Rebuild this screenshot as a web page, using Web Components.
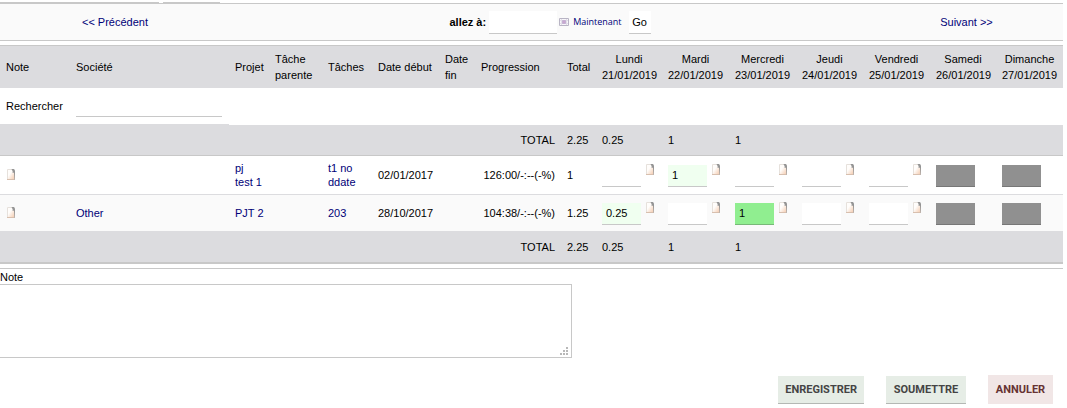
<!DOCTYPE html>
<html lang="fr">
<head>
<meta charset="utf-8">
<title>Feuille de temps</title>
<style>
body{margin:0;background:#fff;color:#000;font:11px/16px "Liberation Sans",Arial,sans-serif}
</style>
</head>
<body>
<time-page></time-page>
<script>
function define(name, html, setup){
  const tpl=document.createElement('template');
  tpl.innerHTML=html;
  customElements.define(name,class extends HTMLElement{
    connectedCallback(){
      if(this.shadowRoot)return;
      const root=this.attachShadow({mode:'open'});
      root.append(tpl.content.cloneNode(true));
      if(setup)setup(root,this);
    }
  });
}

/* small sheet of paper with a folded corner */
define('note-icon',`
<style>:host{display:block;width:10px;height:12px}svg{display:block}</style>
<svg width="10" height="12" viewBox="0 0 10 12" aria-hidden="true">
  <defs>
    <linearGradient id="g" x1="0" y1="0" x2="1" y2="1"><stop offset=".4" stop-color="#fffdfb"/><stop offset="1" stop-color="#f2c4a4"/></linearGradient>
    <linearGradient id="e" x1="0" y1="0" x2="0" y2="1"><stop offset="0" stop-color="#8c8c8c"/><stop offset="1" stop-color="#c4b8b0"/></linearGradient>
  </defs>
  <path d="M1 0H7L9 3V11H1Z" fill="url(#g)"/>
  <path d="M1.500 10.500V.5H6" fill="none" stroke="#e6e1dc"/>
  <path d="M1 10.500H9" stroke="#d8bfae"/>
  <path d="M8 2H9V11H8Z" fill="url(#e)"/>
  <path d="M5.500 0H8L9 1.500V4H7.500L6.500 2Z" fill="#959595"/>
  <path d="M6 2H7V4H6Z" fill="#d5d2d0"/>
</svg>`);

define('day-field',`
<style>
:host{display:flex;align-items:flex-start;gap:4px}
input{box-sizing:border-box;width:39px;height:22px;margin:1px 0 0;padding:0 4px;border:0;border-bottom:1px solid #c8c8c8;border-radius:0;background:#fff;font:inherit;color:#000}
:host([kind=pale]) input{background:#f0fff0}
:host([kind=strong]) input{background:#90ee90;border-color:#78b878}
:host([kind=off]) input{background:#909090;border-color:#777}
:host([kind=off]) note-icon{display:none}
</style>
<input type="text"><note-icon></note-icon>`,(root,host)=>{
  const i=root.querySelector('input');
  i.value=host.getAttribute('value')||'';
  i.setAttribute('aria-label',host.getAttribute('label'));
  i.disabled=host.getAttribute('kind')==='off';
});

define('week-nav',`
<style>
:host{display:grid;grid-template-columns:230fr 640fr 193fr;align-items:center;justify-items:center;height:36px;background:#fafafa;border:solid #c8c8c8;border-width:1px 0}
a{color:#000078;text-decoration:none}
form{display:flex;align-items:center;margin:0}
label{font-weight:bold}
input{box-sizing:border-box;width:68px;height:23px;margin:0 2px 0 3px;padding:0 4px;border:0;border-bottom:1px solid #c8c8c8;background:#fff;font:inherit}
button{margin:0;padding:0;border:0;background:none;font:inherit;color:#000}
.cal{line-height:0}
.now{margin:0 7px 0 4px;font:9px/16px "Open Sans",sans-serif;color:#000078}
.go{width:22px;height:23px;background:#fff;border-bottom:1px solid #c8c8c8}
</style>
<a href="#precedent">&lt;&lt; Précédent</a>
<form>
  <label for="d">allez à:</label><input id="d" type="text">
  <button type="button" class="cal" aria-label="Calendrier"><svg width="10" height="8" viewBox="0 0 10 8"><path d="M.5 .5H9.500V7.500H.5Z" fill="#f8f6fa" stroke="#b8b4c4"/><path d="M2.500 1V7M7.500 1V7M1 2.500H9M1 5.500H9" stroke="#e2dee8" fill="none"/><path d="M3.500 2.500H6.500V5.500H3.500Z" fill="#c9a6d0" stroke="#c4b0d2"/></svg></button>
  <button type="button" class="now">Maintenant</button>
  <button type="button" class="go">Go</button>
</form>
<a href="#suivant">Suivant &gt;&gt;</a>`);

define('time-table',`
<style>
:host{display:block}
table{width:100%;table-layout:fixed;border-collapse:separate;border-spacing:0;border-top:1px solid #c8c8c8;border-bottom:2px solid #c8c8c8}
td,th{box-sizing:border-box;padding:0 6px;text-align:left;vertical-align:middle;font-weight:normal}
.w70{width:70px}.w40{width:40px}.w53{width:53px}.w50{width:50px}.w67{width:67px}.w36{width:36px}.w86{width:86px}.w35{width:35px}.w66{width:66px}
thead tr,.total{background:#dcdcdf}
thead th{height:42px}
thead .day{text-align:center}
.search td{height:37px}
.search .edge{border-bottom:1px solid #dcdcdf}
.search input{box-sizing:border-box;width:100%;max-width:146px;height:22px;display:block;border:0;border-bottom:1px solid #c8c8c8;padding:0 4px;font:inherit}
.total td,.total th{height:31px}
.first td,.first th{border-bottom:1px solid #c8c8c8}
.total th,.num{text-align:right;white-space:nowrap}
.row td{height:39px;line-height:14px;border-bottom:1px solid #dcdcdf}
.row.alt td{height:36px;border-bottom:0;background:#fafafa}
.day{padding-right:0}
thead .day{padding-right:6px}
a{color:#000078;text-decoration:none}
.name{white-space:nowrap}
</style>
<table>
<colgroup><col class="w70"><col><col class="w40"><col class="w53"><col class="w50"><col class="w67"><col class="w36"><col class="w86"><col class="w35"><col class="w66"><col class="w67"><col class="w67"><col class="w67"><col class="w67"><col class="w66"><col class="w67"></colgroup>
<thead><tr><th>Note</th><th>Société</th><th>Projet</th><th>Tâche parente</th><th>Tâches</th><th>Date début</th><th>Date fin</th><th>Progression</th><th>Total</th>
<th class="day">Lundi<br>21/01/2019</th><th class="day">Mardi<br>22/01/2019</th><th class="day">Mercredi<br>23/01/2019</th><th class="day">Jeudi<br>24/01/2019</th><th class="day">Vendredi<br>25/01/2019</th><th class="day">Samedi<br>26/01/2019</th><th class="day">Dimanche<br>27/01/2019</th></tr></thead>
<tbody>
<tr class="search"><td class="edge"><label for="s">Rechercher</label></td><td class="edge"><input id="s" type="text"></td><td colspan="14"></td></tr>
<tr class="total first"><th colspan="8">TOTAL</th><td>2.25</td><td>0.25</td><td>1</td><td>1</td><td></td><td></td><td></td><td></td></tr>
<tr class="row"><td><note-icon></note-icon></td><td></td><td class="name"><a href="#pj">pj<br>test 1</a></td><td></td><td><a href="#t1">t1 no ddate</a></td><td>02/01/2017</td><td></td><td class="num">126:00/-:--(-%)</td><td>1</td>
<td class="day"><day-field label="Lundi"></day-field></td><td class="day"><day-field label="Mardi" value="1" kind="pale"></day-field></td><td class="day"><day-field label="Mercredi"></day-field></td><td class="day"><day-field label="Jeudi"></day-field></td><td class="day"><day-field label="Vendredi"></day-field></td><td class="day"><day-field label="Samedi" kind="off"></day-field></td><td class="day"><day-field label="Dimanche" kind="off"></day-field></td></tr>
<tr class="row alt"><td><note-icon></note-icon></td><td><a href="#other">Other</a></td><td class="name"><a href="#pjt2">PJT 2</a></td><td></td><td><a href="#203">203</a></td><td>28/10/2017</td><td></td><td class="num">104:38/-:--(-%)</td><td>1.25</td>
<td class="day"><day-field label="Lundi" value="0.25" kind="pale"></day-field></td><td class="day"><day-field label="Mardi"></day-field></td><td class="day"><day-field label="Mercredi" value="1" kind="strong"></day-field></td><td class="day"><day-field label="Jeudi"></day-field></td><td class="day"><day-field label="Vendredi"></day-field></td><td class="day"><day-field label="Samedi" kind="off"></day-field></td><td class="day"><day-field label="Dimanche" kind="off"></day-field></td></tr>
<tr class="total"><th colspan="8">TOTAL</th><td>2.25</td><td>0.25</td><td>1</td><td>1</td><td></td><td></td><td></td><td></td></tr>
</tbody>
</table>`);

define('note-box',`
<style>
:host{display:block;border-top:1px solid #c8c8c8}
label{display:block;height:15px}
.box{position:relative;width:572px;max-width:100%}
textarea{box-sizing:border-box;display:block;width:100%;height:74px;margin:0;padding:2px 4px;border:1px solid #c8c8c8;border-left:0;border-radius:0;resize:none;font:inherit;background:#fff}
svg{position:absolute;right:4px;bottom:3px;pointer-events:none}
</style>
<label for="n">Note</label>
<div class="box"><textarea id="n"></textarea>
<svg width="8" height="8" aria-hidden="true" fill="#b8b8b8"><path d="M6 0h2v2h-2zM3 3h2v2h-2zM6 3h2v2h-2zM0 6h2v2h-2zM3 6h2v2h-2zM6 6h2v2h-2z"/></svg></div>`);

define('action-button',`
<style>
:host{display:block}
button{box-sizing:border-box;height:28px;min-width:80px;margin:0;padding:0 7px;border:0;border-bottom:1px solid #b4b8b4;border-radius:0;background:#e6ede6;color:#444;font:bold 11px/16px Roboto,sans-serif;display:block}
:host([cancel]) button{height:29px;min-width:65px;border-bottom:0;background:#f1e6e6;color:#633}
</style>
<button type="button"><slot></slot></button>`);

define('time-page',`
<style>
:host{display:block}
main{margin-right:4px}
.tabs{display:flex;gap:4px;height:3px}
.tabs span{box-sizing:border-box;border-bottom:1px solid #c8c8c8;width:159px}
.tabs span+span{width:57px}
time-table{margin:4px 0}
.actions{display:flex;justify-content:flex-end;align-items:flex-end;gap:22px;padding:17px 14px 0 0}
</style>
<main>
<div class="tabs"><span></span><span></span></div>
<week-nav></week-nav>
<time-table></time-table>
<note-box></note-box>
</main>
<div class="actions"><action-button>ENREGISTRER</action-button><action-button>SOUMETTRE</action-button><action-button cancel>ANNULER</action-button></div>`);
</script>
</body>
</html>
